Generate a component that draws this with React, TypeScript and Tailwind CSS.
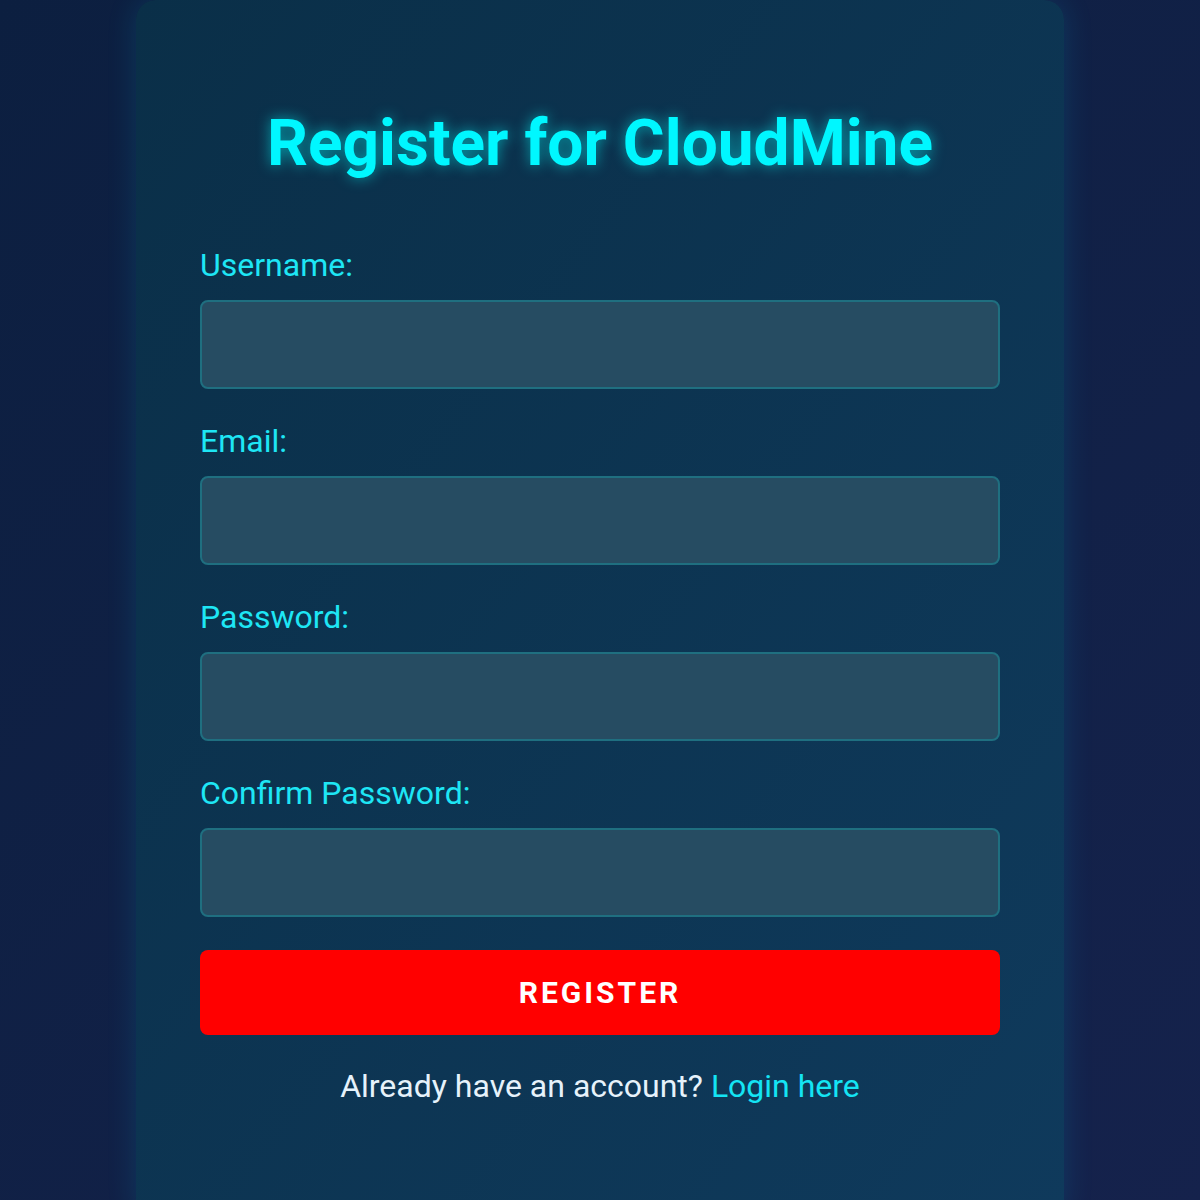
const fields = [
  { id: "username", label: "Username:", type: "text" },
  { id: "email", label: "Email:", type: "email" },
  { id: "password", label: "Password:", type: "password" },
  { id: "confirm", label: "Confirm Password:", type: "password" },
];

export default function App() {
  return (
    <div
      className="min-h-screen w-full bg-gradient-to-br from-[#0c1f40] to-[#15224c] flex justify-center"
      style={{ fontFamily: "Roboto, 'Liberation Sans', sans-serif" }}
    >
      <div className="w-[928px] rounded-[20px] bg-gradient-to-br from-[#0a2f48] to-[#0f3a5c] px-16 pt-[106px] pb-[110px] shadow-[0_0_30px_rgba(0,200,255,0.15)]">
        <h1 className="text-center text-[64px] leading-[75px] font-bold text-[#00f7ff] [text-shadow:0_0_14px_rgba(0,255,255,0.55)] mb-16">
          Register for CloudMine
        </h1>

        <form className="flex flex-col" onSubmit={(e) => e.preventDefault()}>
          {fields.map((f) => (
            <div key={f.id} className="mb-8">
              <label
                htmlFor={f.id}
                className="block text-[32px] leading-[40px] text-[#1ee6f5] mb-[15px]"
              >
                {f.label}
              </label>
              <input
                id={f.id}
                type={f.type}
                className="block w-full h-[89px] rounded-lg border-2 border-[#1f6f80] bg-[#264c62] px-4 text-white text-[28px] focus:outline-none"
              />
            </div>
          ))}

          <button
            type="submit"
            className="block w-full h-[85px] mt-px rounded-lg bg-[#ff0000] text-white text-[30px] font-bold uppercase tracking-[3px]"
          >
            Register
          </button>
        </form>

        <p className="mt-[27px] text-center text-[32px] leading-[48px] text-[#e6f2fb]">
          Already have an account?{" "}
          <a href="#" className="text-[#14e4f4]">
            Login here
          </a>
        </p>
      </div>
    </div>
  );
}
